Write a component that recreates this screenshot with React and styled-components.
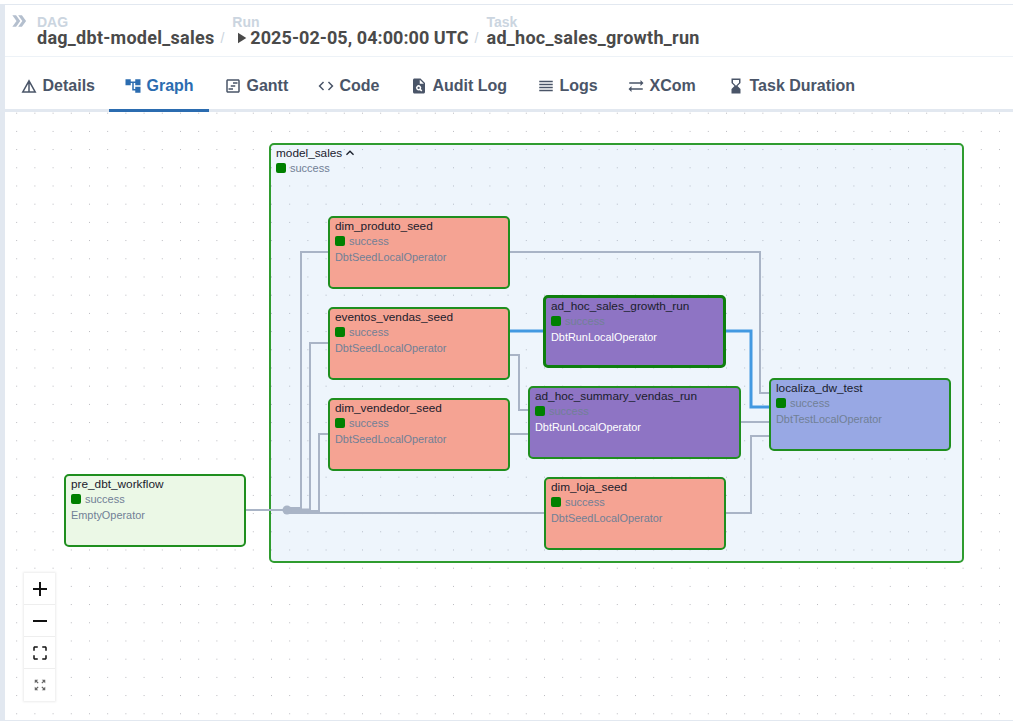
import styled, { createGlobalStyle } from "styled-components";
import {
  MdDetails,
  MdAccountTree,
  MdOutlineViewTimeline,
  MdCode,
  MdPlagiarism,
  MdReorder,
  MdSyncAlt,
  MdHourglassBottom,
  MdPlayArrow,
  MdDoubleArrow,
  MdExpandLess,
  MdAdd,
  MdRemove,
  MdCropFree,
  MdZoomOutMap,
} from "react-icons/md";

const GlobalStyle = createGlobalStyle`
  html, body, #root { margin: 0; height: 100%; }
  body { font-family: "Liberation Sans", Arial, sans-serif; background: #fff; overflow: hidden; }
`;

const Page = styled.div`
  margin-top: 4px;
  display: flex;
  flex-direction: column;
  border-top: 1px solid #e2e8f0;
  border-left: 5px solid #e2e8f0;
  border-bottom: 1px solid #e2e8f0;
  box-sizing: border-box;
  height: 717px;
`;

const Crumbs = styled.header`
  height: 51px;
  flex: none;
  display: flex;
  align-items: flex-start;
  border-bottom: 1px solid #edf2f7;
`;

const Collapse = styled.div`
  width: 32px;
  padding: 6px 0 0 4px;
  box-sizing: border-box;
  color: #b4bfce;
  svg { display: block; }
`;

const Crumb = styled.div`
  padding-top: 10px;
  white-space: nowrap;
`;

const CrumbLabel = styled.div`
  font-size: 14px;
  line-height: 14px;
  font-weight: 700;
  color: #cbd5e0;
`;

const CrumbValue = styled.div`
  display: flex;
  align-items: center;
  font-family: Roboto, "Liberation Sans", sans-serif;
  font-size: 18px;
  line-height: 18px;
  font-weight: 700;
  letter-spacing: ${(p) => p.$spacing}px;
  color: #4a4a4a;
`;

const Slash = styled.span`
  font-size: 14px;
  line-height: 18px;
  margin: 24px 8px 0 6px;
  color: #cbd5e0;
`;

const Tabs = styled.nav`
  height: 52px;
  flex: none;
  display: flex;
  border-bottom: 3px solid #e2e8f0;
`;

const Tab = styled.div`
  width: ${(p) => p.$w}px;
  flex: none;
  box-sizing: border-box;
  height: 55px;
  padding: 6px 0 0 15px;
  display: flex;
  align-items: center;
  gap: 4.5px;
  font-size: 16px;
  font-weight: 700;
  white-space: nowrap;
  color: ${(p) => (p.$active ? "#2b6cb0" : "#4a5568")};
  border-bottom: 3px solid ${(p) => (p.$active ? "#2b6cb0" : "transparent")};
`;

const Canvas = styled.main`
  flex: 1;
  position: relative;
  overflow: hidden;
`;

const Layer = styled.svg`
  position: absolute;
  left: 0;
  top: 0;
  width: 1008px;
  height: 608px;
`;

const Box = styled.div`
  position: absolute;
  left: ${(p) => p.$x - 5}px;
  top: ${(p) => p.$y - 112}px;
  width: ${(p) => p.$w}px;
  height: ${(p) => p.$h}px;
  box-sizing: border-box;
  padding: 0 5px;
  border-radius: 5px;
  border: ${(p) => p.$b || 2}px solid ${(p) => (p.$group ? "#2f9c2f" : p.$b ? "#0e7f0e" : "#1f8f1f")};
  background: ${(p) => p.$bg};
  font-size: 11.8px;
`;

const Name = styled.div`
  display: flex;
  align-items: center;
  height: 15px;
  color: #1a202c;
  white-space: nowrap;
`;

const StateRow = styled.div`
  display: flex;
  align-items: center;
  gap: 4px;
  margin-top: 1px;
  height: 13px;
  font-size: 11px;
  color: #718096;
`;

const Square = styled.span`
  width: 10px;
  height: 10px;
  border-radius: 2px;
  background: #008000;
`;

const Operator = styled.div`
  margin-top: 4px;
  height: 13px;
  line-height: 13px;
  font-size: 10.9px;
  color: ${(p) => p.$color};
  white-space: nowrap;
`;

const Controls = styled.div`
  position: absolute;
  left: 19px;
  top: 461px;
  width: 31px;
  background: #fff;
  box-shadow: 0 0 2px 1px rgba(0, 0, 0, 0.08);
`;

const ControlButton = styled.div`
  height: 32px;
  display: flex;
  align-items: center;
  justify-content: center;
  border-bottom: 1px solid #eee;
  box-sizing: border-box;
  color: ${(p) => p.$color || "#111"};
  &:last-child { border-bottom: none; }
`;

const salmon = "#f5a393";
const purple = "#8e74c4";

const nodes = [
  { name: "dim_produto_seed", op: "DbtSeedLocalOperator", x: 328, y: 216, w: 182, bg: salmon },
  { name: "eventos_vendas_seed", op: "DbtSeedLocalOperator", x: 328, y: 307, w: 182, bg: salmon },
  { name: "dim_vendedor_seed", op: "DbtSeedLocalOperator", x: 328, y: 398, w: 182, bg: salmon },
  { name: "ad_hoc_sales_growth_run", op: "DbtRunLocalOperator", x: 543, y: 295, w: 183, bg: purple, light: true, b: 3 },
  { name: "ad_hoc_summary_vendas_run", op: "DbtRunLocalOperator", x: 528, y: 386, w: 213, bg: purple, light: true },
  { name: "dim_loja_seed", op: "DbtSeedLocalOperator", x: 544, y: 477, w: 182, bg: salmon },
  { name: "localiza_dw_test", op: "DbtTestLocalOperator", x: 769, y: 378, w: 182, bg: "#98a8e4" },
  { name: "pre_dbt_workflow", op: "EmptyOperator", x: 64, y: 474, w: 182, bg: "#ebf8e6" },
];

const grayEdges = [
  "M246 510 H287",
  "M287 508 H301 V252 H329",
  "M287 509.5 H310 V343 H329",
  "M287 511 H319 V434 H329",
  "M287 513 H544",
  "M509 252 H760 V393 H769",
  "M509 355 H519 V410 H528",
  "M509 434 H528",
  "M741 422 H769",
  "M726 513 H751 V436 H769",
];

const blueEdges = ["M509 331 H544", "M726 331 H751 V407 H769"];

const tabs = [
  { label: "Details", Icon: MdDetails, w: 104 },
  { label: "Graph", Icon: MdAccountTree, w: 100, active: true },
  { label: "Gantt", Icon: MdOutlineViewTimeline, w: 93 },
  { label: "Code", Icon: MdCode, w: 93 },
  { label: "Audit Log", Icon: MdPlagiarism, w: 127 },
  { label: "Logs", Icon: MdReorder, w: 90 },
  { label: "XCom", Icon: MdSyncAlt, w: 100 },
  { label: "Task Duration", Icon: MdHourglassBottom, w: 160 },
];

const App = () => {
  return (
    <>
      <GlobalStyle />
      <Page>
        <Crumbs>
          <Collapse>
            <MdDoubleArrow size={20} />
          </Collapse>
          <Crumb>
            <CrumbLabel>DAG</CrumbLabel>
            <CrumbValue $spacing={0.26}>dag_dbt-model_sales</CrumbValue>
          </Crumb>
          <Slash>/</Slash>
          <Crumb>
            <CrumbLabel>Run</CrumbLabel>
            <CrumbValue $spacing={0.06}>
              <MdPlayArrow size={18} />
              2025-02-05, 04:00:00 UTC
            </CrumbValue>
          </Crumb>
          <Slash>/</Slash>
          <Crumb>
            <CrumbLabel>Task</CrumbLabel>
            <CrumbValue $spacing={0.27}>ad_hoc_sales_growth_run</CrumbValue>
          </Crumb>
        </Crumbs>
        <Tabs>
          {tabs.map(({ label, Icon, w, active }) => (
            <Tab key={label} $w={w} $active={active}>
              <Icon size={18} />
              {label}
            </Tab>
          ))}
        </Tabs>
        <Canvas>
          <Layer viewBox="5 112 1008 608">
            <defs>
              <pattern id="dots" x="16.2" y="112.7" width="18.2" height="18.2" patternUnits="userSpaceOnUse">
                <circle cx="0.5" cy="0.5" r="0.5" fill="#a0a0a8" />
              </pattern>
            </defs>
            <rect x="5" y="112" width="1008" height="608" fill="url(#dots)" />
          </Layer>
          <Box $group $x={269} $y={143} $w={695} $h={420} $bg="rgba(170, 205, 240, 0.2)">
            <Name>
              model_sales
              <MdExpandLess size={16} />
            </Name>
            <StateRow>
              <Square />
              success
            </StateRow>
          </Box>
          <Layer viewBox="5 112 1008 608" fill="none">
            {grayEdges.map((d) => (
              <path key={d} d={d} stroke="#a9b4c6" strokeWidth="2" />
            ))}
            {blueEdges.map((d) => (
              <path key={d} d={d} stroke="#4299e1" strokeWidth="3" />
            ))}
            <circle cx="287" cy="510" r="4.5" fill="#a9b4c6" />
          </Layer>
          {nodes.map((n) => (
            <Box key={n.name} $x={n.x} $y={n.y} $w={n.w} $h={73} $bg={n.bg} $b={n.b}>
              <Name>{n.name}</Name>
              <StateRow>
                <Square />
                success
              </StateRow>
              <Operator $color={n.light ? "#fff" : "#718096"}>{n.op}</Operator>
            </Box>
          ))}
          <Controls>
            <ControlButton>
              <MdAdd size={24} />
            </ControlButton>
            <ControlButton>
              <MdRemove size={24} />
            </ControlButton>
            <ControlButton>
              <MdCropFree size={18} />
            </ControlButton>
            <ControlButton $color="#666">
              <MdZoomOutMap size={14} />
            </ControlButton>
          </Controls>
        </Canvas>
      </Page>
    </>
  );
};

export default App;
